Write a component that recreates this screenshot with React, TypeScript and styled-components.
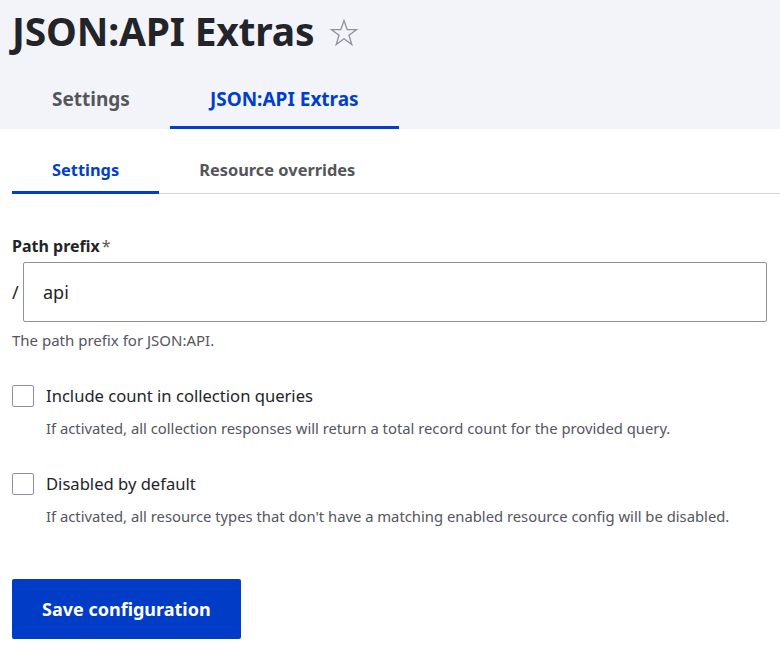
import React from "react";
import styled, { createGlobalStyle } from "styled-components";

const Global = createGlobalStyle`
  html, body { margin: 0; padding: 0; background: #ffffff; }
  body { font-family: "Noto Sans", "Open Sans", sans-serif; color: #232429; }
  * { box-sizing: border-box; }
`;

const Header = styled.header`
  background: #f3f4f9;
  padding: 5px 0 0 12px;
`;

const TitleRow = styled.div`
  display: flex;
  align-items: center;
  gap: 15px;
  height: 52px;
`;

const Title = styled.h1`
  margin: 0;
  font-size: 39px;
  font-weight: 700;
  letter-spacing: -0.2px;
  color: #232429;
  line-height: 52px;
`;

const StarIcon = styled.svg`
  width: 30px;
  height: 30px;
  margin-top: 4px;
`;

const PrimaryTabs = styled.nav`
  display: flex;
  margin-top: 14px;
`;

const PrimaryTab = styled.div<{ $active?: boolean }>`
  padding: 0 40px 2px;
  height: 58px;
  display: flex;
  align-items: center;
  font-size: 19px;
  font-weight: 700;
  color: ${(p) => (p.$active ? "#003ecc" : "#55565b")};
  box-shadow: ${(p) => (p.$active ? "inset 0 -3px 0 #003ecc" : "none")};
`;

const Main = styled.main`
  padding: 0 0 0 12px;
`;

const SecondaryTabs = styled.nav`
  display: flex;
  border-bottom: 1px solid #d3d4d9;
  height: 65px;
`;

const SecondaryTab = styled.div<{ $active?: boolean }>`
  padding: 16px 40px 0;
  display: flex;
  align-items: center;
  font-size: 16.4px;
  font-weight: 700;
  color: ${(p) => (p.$active ? "#003ecc" : "#55565b")};
  box-shadow: ${(p) => (p.$active ? "inset 0 -3px 0 #003ecc" : "none")};
  margin-bottom: -1px;
`;

const Form = styled.form`
  padding-top: 40px;
  padding-right: 13px;
`;

const Label = styled.label`
  display: block;
  font-size: 16px;
  font-weight: 700;
  line-height: 24px;
  color: #232429;
`;

const Required = styled.span`
  color: #55565b;
  font-weight: 400;
  margin-left: 2px;
`;

const PrefixRow = styled.div`
  display: flex;
  align-items: center;
  margin-top: 4px;
`;

const Prefix = styled.span`
  font-size: 18px;
  width: 11px;
  color: #232429;
`;

const TextInput = styled.div`
  flex: 1;
  height: 60px;
  border: 1px solid #8e929c;
  border-radius: 2px;
  display: flex;
  align-items: center;
  padding: 0 19px;
  font-size: 18px;
  color: #232429;
`;

const Help = styled.div`
  font-size: 15px;
  color: #545560;
  line-height: 20px;
  margin-top: 8px;
`;

const CheckItem = styled.div`
  margin-top: 34px;
`;

const CheckRow = styled.div`
  display: flex;
  align-items: center;
  gap: 12px;
`;

const Box = styled.span`
  width: 22px;
  height: 22px;
  border: 1px solid #8e929c;
  border-radius: 2px;
  background: #fff;
  flex: none;
`;

const CheckLabel = styled.span`
  font-size: 16.6px;
  line-height: 24px;
  color: #232429;
`;

const CheckHelp = styled(Help)`
  font-size: 14.8px;
  margin-left: 34px;
  margin-top: 10px;
`;

const Actions = styled.div`
  margin-top: 53px;
`;

const Button = styled.button`
  background: #003cc5;
  color: #fff;
  border: none;
  border-radius: 2px;
  height: 60px;
  padding: 0 30px;
  font-family: inherit;
  font-size: 18px;
  font-weight: 700;
`;

export default function App() {
  return (
    <>
      <Global />
      <Header>
        <TitleRow>
          <Title>JSON:API Extras</Title>
          <StarIcon viewBox="0 0 30 30">
            <path
              d="M15 2.5 L18.2 11.6 L27.6 11.6 L20 17.2 L22.8 26.5 L15 20.8 L7.2 26.5 L10 17.2 L2.4 11.6 L11.8 11.6 Z"
              fill="none"
              stroke="#8e929c"
              strokeWidth="1.3"
              strokeLinejoin="miter"
            />
          </StarIcon>
        </TitleRow>
        <PrimaryTabs>
          <PrimaryTab>Settings</PrimaryTab>
          <PrimaryTab $active>JSON:API Extras</PrimaryTab>
        </PrimaryTabs>
      </Header>
      <Main>
        <SecondaryTabs>
          <SecondaryTab $active>Settings</SecondaryTab>
          <SecondaryTab>Resource overrides</SecondaryTab>
        </SecondaryTabs>
        <Form>
          <Label>
            Path prefix<Required>*</Required>
          </Label>
          <PrefixRow>
            <Prefix>/</Prefix>
            <TextInput>api</TextInput>
          </PrefixRow>
          <Help>The path prefix for JSON:API.</Help>
          <CheckItem>
            <CheckRow>
              <Box />
              <CheckLabel>Include count in collection queries</CheckLabel>
            </CheckRow>
            <CheckHelp>
              If activated, all collection responses will return a total record count for the provided query.
            </CheckHelp>
          </CheckItem>
          <CheckItem>
            <CheckRow>
              <Box />
              <CheckLabel>Disabled by default</CheckLabel>
            </CheckRow>
            <CheckHelp>
              If activated, all resource types that don't have a matching enabled resource config will be disabled.
            </CheckHelp>
          </CheckItem>
          <Actions>
            <Button type="button">Save configuration</Button>
          </Actions>
        </Form>
      </Main>
    </>
  );
}
